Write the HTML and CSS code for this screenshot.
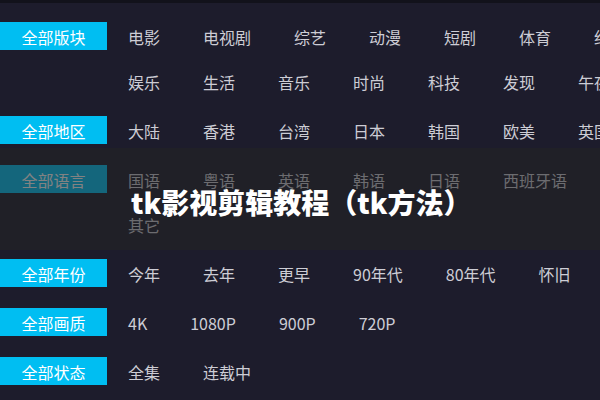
FILE: index.html
```html
<!DOCTYPE html>
<html lang="zh-CN">
<head>
<meta charset="utf-8">
<title>tk影视剪辑教程（tk方法）</title>
<link rel="stylesheet" href="styles.css">
</head>
<body>
<div class="page">
  <div class="filters">
    <div class="row">
      <div class="label">全部版块</div>
      <div class="lines">
        <div class="line"><span>电影</span><span>电视剧</span><span>综艺</span><span>动漫</span><span>短剧</span><span>体育</span><span>纪录片</span></div>
        <div class="line"><span>娱乐</span><span>生活</span><span>音乐</span><span>时尚</span><span>科技</span><span>发现</span><span>午夜</span></div>
      </div>
    </div>
    <div class="row">
      <div class="label">全部地区</div>
      <div class="lines">
        <div class="line"><span>大陆</span><span>香港</span><span>台湾</span><span>日本</span><span>韩国</span><span>欧美</span><span>英国</span></div>
      </div>
    </div>
    <div class="row">
      <div class="label">全部语言</div>
      <div class="lines">
        <div class="line"><span>国语</span><span>粤语</span><span>英语</span><span>韩语</span><span>日语</span><span>西班牙语</span></div>
        <div class="line"><span>其它</span></div>
      </div>
    </div>
    <div class="row">
      <div class="label">全部年份</div>
      <div class="lines">
        <div class="line"><span>今年</span><span>去年</span><span>更早</span><span>90年代</span><span>80年代</span><span>怀旧</span></div>
      </div>
    </div>
    <div class="row">
      <div class="label">全部画质</div>
      <div class="lines">
        <div class="line"><span>4K</span><span>1080P</span><span>900P</span><span>720P</span></div>
      </div>
    </div>
    <div class="row">
      <div class="label">全部状态</div>
      <div class="lines">
        <div class="line"><span>全集</span><span>连载中</span></div>
      </div>
    </div>
  </div>
  <div class="overlay">
    <h1 class="title">tk影视剪辑教程（tk方法）</h1>
  </div>
</div>
</body>
</html>
```
FILE: styles.css
```css
html, body {
  margin: 0;
  padding: 0;
  overflow: hidden;
  background: #1d1c2c;
}

.page {
  position: relative;
  width: 600px;
  height: 400px;
  overflow: hidden;
  background: #1d1c2c;
  border-top: 3px solid #12121b;
  box-sizing: border-box;
  font-family: "Noto Sans CJK SC", "Noto Sans", sans-serif;
  font-size: 16px;
}

.filters {
  display: flex;
  flex-direction: column;
  gap: 21px;
  padding-top: 19px;
}

.row {
  display: flex;
  align-items: flex-start;
}

.label {
  flex: 0 0 107px;
  height: 26px;
  padding-top: 2px;
  line-height: 26px;
  background: #00bef2;
  color: #ffffff;
  text-align: center;
}

.lines {
  display: flex;
  flex-direction: column;
  gap: 17px;
  margin-left: 21px;
}

.line {
  display: flex;
  gap: 43px;
  height: 26px;
  padding-top: 2px;
  line-height: 26px;
  color: #cdcdd5;
  white-space: nowrap;
}

.line span:nth-child(n) {
  flex: none;
}

.overlay {
  position: absolute;
  left: 0;
  top: 145px;
  width: 100%;
  height: 102px;
  background: rgba(36, 36, 36, 0.57);
  box-sizing: border-box;
  padding: 35px 0 0 131px;
}

.title {
  margin: 0;
  font-size: 28px;
  line-height: 39px;
  font-weight: 900;
  color: #ffffff;
  white-space: nowrap;
}
```
